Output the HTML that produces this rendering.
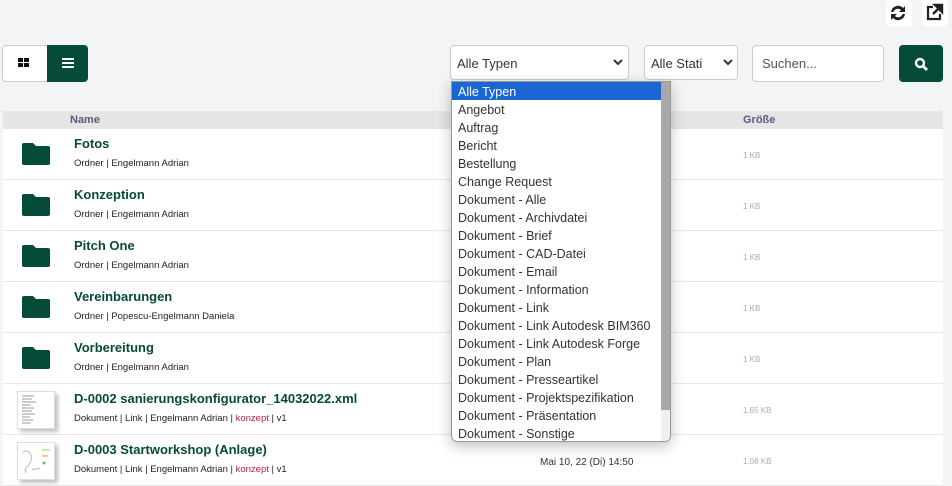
<!DOCTYPE html>
<html><head><meta charset="utf-8"><style>
*{box-sizing:border-box;margin:0;padding:0}
body{width:952px;height:485px;overflow:hidden;background:#f3f4f6;font-family:"Liberation Sans",sans-serif;position:relative}
.abs{position:absolute}
.btn{position:absolute;border-radius:4px}
.sel{position:absolute;background:#fff;border:1px solid #ccc;border-radius:4px;font-size:13px;color:#333;padding:0 6px;line-height:36px}
.table{position:absolute;left:3px;top:111px;width:940px;height:374px;background:#fff}
.hdr{position:absolute;left:0;top:0;width:940px;height:18px;background:#e5e5e5;font-size:11px;font-weight:bold;color:#5d5a7c;line-height:18px}
.row{position:absolute;left:0;width:940px;height:51px;border-bottom:1px solid #e8e8e8}
.t{position:absolute;left:71px;top:7px;font-size:13px;font-weight:bold;color:#064a3a}
.s{position:absolute;left:71px;top:29px;font-size:9.5px;color:#222}
.sz{position:absolute;left:740px;top:22px;font-size:8px;color:#aaa}
.red{color:#c0203a}
.fold{position:absolute;left:19px;top:12px;width:28px;height:24px}
.thumb{position:absolute;left:14px;top:7px;width:38px;height:38px;background:#fff;border:1px solid #ddd;box-shadow:3px 3px 4px rgba(0,0,0,.25)}
.dd{position:absolute;left:451px;top:81px;width:220px;height:361px;background:#fff;border:1px solid #999;border-radius:0 0 6px 6px;box-shadow:0 4px 14px rgba(0,0,0,.25);overflow:hidden;font-size:12.5px;color:#333}
.dd div{height:18px;line-height:20px;padding-left:6px;white-space:nowrap}
</style></head><body>
<div class="btn" style="left:886px;top:0;width:26px;height:26px;background:#fff"></div>
<svg class="abs" style="left:888px;top:3px" width="20" height="20" viewBox="0 0 20 20"><path d="M3 9a7 7 0 0 1 12-4l2-2v6h-6l2-2a4.5 4.5 0 0 0-7.5 2z M17 11a7 7 0 0 1-12 4l-2 2v-6h6l-2 2a4.5 4.5 0 0 0 7.5-2z" fill="#222"/></svg>
<div class="btn" style="left:922px;top:0;width:26px;height:26px;background:#fff"></div>
<svg class="abs" style="left:924px;top:3px" width="20" height="20" viewBox="0 0 20 20"><path d="M9 4H4v12h12v-5" fill="none" stroke="#222" stroke-width="2.2"/><path d="M11 2h7v7z M17 3l-8 8" stroke="#222" stroke-width="2.4" fill="#222"/></svg>

<div class="btn" style="left:2px;top:45px;width:46px;height:37px;background:#fff;border:1px solid #ccc;border-radius:4px 0 0 4px"></div>
<svg class="abs" style="left:18px;top:58px" width="12" height="10"><rect x="0" y="0" width="5" height="4" fill="#111"/><rect x="6" y="0" width="5" height="4" fill="#111"/><rect x="0" y="5" width="5" height="4" fill="#111"/><rect x="6" y="5" width="5" height="4" fill="#111"/></svg>
<div class="btn" style="left:47px;top:45px;width:41px;height:37px;background:#064a3a;border-radius:0 4px 4px 0"></div>
<svg class="abs" style="left:62px;top:58px" width="12" height="10"><rect y="0" width="12" height="2" fill="#fff"/><rect y="4" width="12" height="2" fill="#fff"/><rect y="8" width="12" height="2" fill="#fff"/></svg>

<div class="sel" style="left:450px;top:45px;width:179px;height:35px">Alle Typen</div>
<div class="sel" style="left:644px;top:45px;width:94px;height:35px">Alle Stati</div>
<svg class="abs" style="left:723px;top:59px" width="10" height="7"><path d="M1 1l4 4 4-4" fill="none" stroke="#333" stroke-width="2"/></svg>
<svg class="abs" style="left:613px;top:59px" width="10" height="7"><path d="M1 1l4 4 4-4" fill="none" stroke="#333" stroke-width="2"/></svg>
<div class="sel" style="left:752px;top:45px;width:132px;height:37px;color:#555;padding-left:9px">Suchen...</div>
<div class="btn" style="left:899px;top:45px;width:44px;height:37px;background:#064a3a"></div>
<svg class="abs" style="left:914px;top:57px" width="14" height="14"><circle cx="6" cy="6" r="4" fill="none" stroke="#fff" stroke-width="2.4"/><path d="M9 9l4 4" stroke="#fff" stroke-width="2.8"/></svg>

<div class="table">
<div class="hdr"><span style="position:absolute;left:67px">Name</span><span style="position:absolute;left:740px">Größe</span></div>
<div class="row" style="top:18px"><svg class="fold" viewBox="0 0 28 24"><path d="M2 2h9l3 3h12a2 2 0 0 1 2 2v15a2 2 0 0 1-2 2H2a2 2 0 0 1-2-2V4a2 2 0 0 1 2-2z" fill="#064a3a"/></svg><div class="t">Fotos</div><div class="s">Ordner | Engelmann Adrian</div><div class="sz">1 KB</div></div>
<div class="row" style="top:69px"><svg class="fold" viewBox="0 0 28 24"><path d="M2 2h9l3 3h12a2 2 0 0 1 2 2v15a2 2 0 0 1-2 2H2a2 2 0 0 1-2-2V4a2 2 0 0 1 2-2z" fill="#064a3a"/></svg><div class="t">Konzeption</div><div class="s">Ordner | Engelmann Adrian</div><div class="sz">1 KB</div></div>
<div class="row" style="top:120px"><svg class="fold" viewBox="0 0 28 24"><path d="M2 2h9l3 3h12a2 2 0 0 1 2 2v15a2 2 0 0 1-2 2H2a2 2 0 0 1-2-2V4a2 2 0 0 1 2-2z" fill="#064a3a"/></svg><div class="t">Pitch One</div><div class="s">Ordner | Engelmann Adrian</div><div class="sz">1 KB</div></div>
<div class="row" style="top:171px"><svg class="fold" viewBox="0 0 28 24"><path d="M2 2h9l3 3h12a2 2 0 0 1 2 2v15a2 2 0 0 1-2 2H2a2 2 0 0 1-2-2V4a2 2 0 0 1 2-2z" fill="#064a3a"/></svg><div class="t">Vereinbarungen</div><div class="s">Ordner | Popescu-Engelmann Daniela</div><div class="sz">1 KB</div></div>
<div class="row" style="top:222px"><svg class="fold" viewBox="0 0 28 24"><path d="M2 2h9l3 3h12a2 2 0 0 1 2 2v15a2 2 0 0 1-2 2H2a2 2 0 0 1-2-2V4a2 2 0 0 1 2-2z" fill="#064a3a"/></svg><div class="t">Vorbereitung</div><div class="s">Ordner | Engelmann Adrian</div><div class="sz">1 KB</div></div>
<div class="row" style="top:273px"><div class="thumb"><svg width="36" height="36"><g stroke="#999" stroke-width="1"><path d="M4 4h12M4 7h10M4 10h14M4 13h9M4 16h12M4 19h10M4 22h13M4 25h8M4 28h11M4 31h9"/></g></svg></div><div class="t">D-0002 sanierungskonfigurator_14032022.xml</div><div class="s">Dokument | Link | Engelmann Adrian | <span class="red">konzept</span> | v1</div><div class="sz">1.65 KB</div></div>
<div class="row" style="top:324px"><div class="thumb"><svg width="36" height="36"><path d="M5 10c5-6 10 2 8 8s-8 6-5 12M14 26c4 2 6-2 8 0" fill="none" stroke="#bbb"/><rect x="24" y="6" width="8" height="2" fill="#cde6a0"/><rect x="24" y="12" width="6" height="2" fill="#e8d08a"/><circle cx="26" cy="20" r="1.5" fill="#6bb86b"/></svg></div><div class="t">D-0003 Startworkshop (Anlage)</div><div class="s">Dokument | Link | Engelmann Adrian | <span class="red">konzept</span> | v1</div><div class="abs" style="left:537px;top:22px;font-size:10px;color:#333">Mai 10, 22 (Di) 14:50</div><div class="sz">1.08 KB</div></div>
</div>

<div class="dd">
<div style="background:#1a66d2;color:#fff">Alle Typen</div>
<div>Angebot</div><div>Auftrag</div><div>Bericht</div><div>Bestellung</div><div>Change Request</div>
<div>Dokument - Alle</div><div>Dokument - Archivdatei</div><div>Dokument - Brief</div><div>Dokument - CAD-Datei</div>
<div>Dokument - Email</div><div>Dokument - Information</div><div>Dokument - Link</div><div>Dokument - Link Autodesk BIM360</div>
<div>Dokument - Link Autodesk Forge</div><div>Dokument - Plan</div><div>Dokument - Presseartikel</div><div>Dokument - Projektspezifikation</div>
<div>Dokument - Präsentation</div><div>Dokument - Sonstige</div>
<span style="position:absolute;left:209px;top:0;width:10px;height:361px;background:#f0f0f0"></span>
<span style="position:absolute;left:209px;top:0;width:10px;height:328px;background:#a8a8a8"></span>
</div>
</body></html>
